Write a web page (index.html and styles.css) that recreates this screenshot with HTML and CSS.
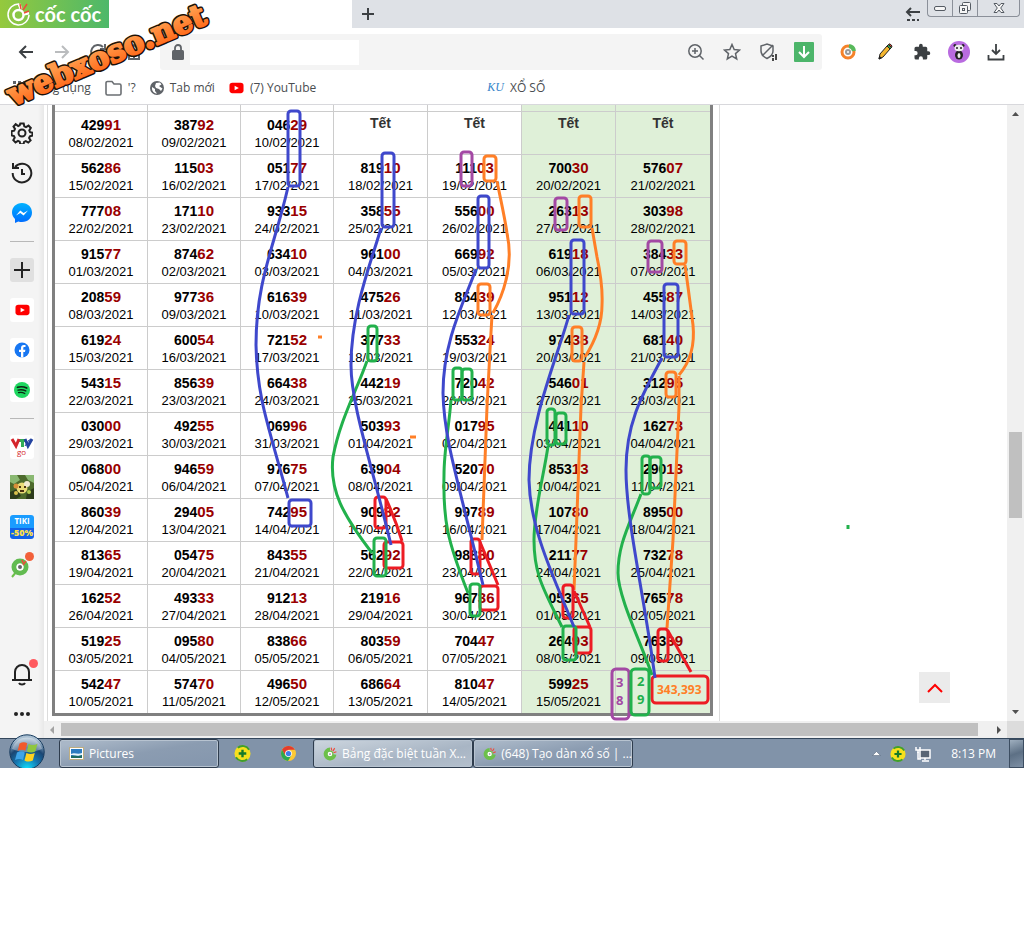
FILE: index.html
```
<!DOCTYPE html>
<html lang="vi">

<head>
    <meta charset="UTF-8">
    <meta name="viewport" content="width=device-width, initial-scale=1.0">
    <title>Bảng đặc biệt tuần</title>
    <link rel="stylesheet" href="styles.css">
</head>

<body>
    <svg class="defs" width="0" height="0" aria-hidden="true">
        <defs>
            <linearGradient id="webxoso" x1="0" y1="0" x2="0" y2="1">
                <stop offset="0.3" stop-color="#ff9a4a"/>
                <stop offset="1" stop-color="#ff5f10"/>
            </linearGradient>
            <linearGradient id="messenger" x1="0" y1="0" x2="0" y2="1">
                <stop offset="0" stop-color="#00b2ff"/>
                <stop offset="1" stop-color="#006aff"/>
            </linearGradient>
            <radialGradient id="orb" cx="0.5" cy="1" r="0.9">
                <stop offset="0" stop-color="#10e4ff"/>
                <stop offset="0.4" stop-color="#1676b0"/>
                <stop offset="0.7" stop-color="#1b4673"/>
                <stop offset="1" stop-color="#a9bfd2"/>
            </radialGradient>
            <symbol id="coccoc" viewBox="0 0 24 24">
                <path d="M12 4A8 8 0 1 0 20 13" fill="none" stroke="#6cc04a" stroke-width="6"/>
                <circle cx="12" cy="12" r="5" fill="#fff" stroke="#6cc04a" stroke-width="2"/>
                <circle cx="12" cy="12" r="1.5" fill="#888"/>
                <path d="M14 1l1 5M20 2l-3 5M23 8l-5 2" stroke="#ee4b3a" stroke-width="2"/>
            </symbol>
            <symbol id="plusball" viewBox="0 0 18 18">
                <circle cx="9" cy="9" r="8.5" fill="#f7e01c"/>
                <path d="M4 3A8 8 0 0 1 16 5M14 15A8 8 0 0 1 2 13" fill="none" stroke="#3f9f2c" stroke-width="2"/>
                <path d="M9 5v8M5 9h8" stroke="#167a2a" stroke-width="2.5"/>
            </symbol>
            <symbol id="youtube" viewBox="0 0 16 12">
                <rect x="0.5" y="0.5" width="15" height="11" rx="3" fill="#f00"/>
                <path d="M6 3.5v5L10.5 6z" fill="#fff"/>
            </symbol>
        </defs>
    </svg>

    <div class="screen">
        <header class="tabstrip">
            <div class="logo">
                <svg width="24" height="24" viewBox="0 0 24 24" fill="none">
                    <path d="M12 2A10.500 10.500 0 1 0 22 13" stroke="#fff" stroke-width="1.5"/>
                    <circle cx="11.5" cy="13" r="5" stroke="#fff" stroke-width="2.5"/>
                    <path d="M12 2l2 5M22 11l-5 1" stroke="#fff" stroke-width="3"/>
                    <path d="M13 2l1 5M20 2l-4 6M22 9l-5 2" stroke="#ee4b3a" stroke-width="1.5"/>
                </svg>
                <span>cốc cốc</span>
            </div>
            <div class="tab"></div>
            <div class="strip">
                <button class="icon-btn small" aria-label="Tab mới">
                    <svg width="14" height="14" viewBox="0 0 14 14" stroke="#3c4043" stroke-width="2"><path d="M7 1v12M1 7h12"/></svg>
                </button>
                <div class="window-buttons">
                    <svg class="restore" width="16" height="16" viewBox="0 0 16 16" fill="none" stroke="#3c4043" stroke-width="2"><path d="M15 6H2M6 2 2 6l4 4"/><path d="M2 14h12" stroke-dasharray="3 2"/></svg>
                    <button aria-label="Thu nhỏ"><svg width="13" height="7" viewBox="0 0 13 7"><rect x="0.5" y="1.5" width="11" height="4" rx="1.5" fill="#f6f6f6" stroke="#555b63"/></svg></button>
                    <button aria-label="Khôi phục"><svg width="14" height="14" viewBox="0 0 14 14" fill="#f6f6f6" stroke="#555b63"><rect x="4.500" y="1.5" width="8" height="8" rx="1"/><rect x="1.5" y="4.5" width="8" height="8" rx="1"/><rect x="4.5" y="7.5" width="2" height="2"/></svg></button>
                    <button class="close" aria-label="Đóng"><svg width="12" height="12" viewBox="0 0 12 12"><path d="M1 1.5h3L6 4l2-2.500h3L7.700 6l3.300 4.500H8L6 8l-2 2.500H1L4.300 6z" fill="#f6f6f6" stroke="#555b63"/></svg></button>
                </div>
            </div>
        </header>

        <div class="toolbar">
            <button class="icon-btn" aria-label="Quay lại"><svg width="16" height="16" viewBox="0 0 16 16" fill="none" stroke="#3c4043" stroke-width="2"><path d="M15 8H2M8 2 2 8l6 6"/></svg></button>
            <button class="icon-btn" aria-label="Tiến"><svg width="16" height="16" viewBox="0 0 16 16" fill="none" stroke="#babcbe" stroke-width="2"><path d="M1 8h13M8 2l6 6-6 6"/></svg></button>
            <button class="icon-btn" aria-label="Tải lại"><svg width="18" height="18" viewBox="0 0 18 18" fill="none" stroke="#5f6368" stroke-width="2"><path d="M16 10A7 7 0 1 1 14 4M16 1v5h-5"/></svg></button>
            <button class="icon-btn" aria-label="Trang chủ"><svg width="18" height="18" viewBox="0 0 18 18" fill="none" stroke="#5f6368" stroke-width="2"><path d="M1 9l8-7 8 7M4 8v8h10V8M9 16v-5"/></svg></button>
            <div class="omnibox">
                <svg class="lock" width="14" height="16" viewBox="0 0 14 16"><rect x="1" y="6" width="12" height="10" rx="1.5" fill="#5f6368"/><path d="M4 7V4a3 3 0 0 1 6 0v3" fill="none" stroke="#5f6368" stroke-width="1.8"/></svg>
                <input type="text" aria-label="Địa chỉ">
                <span class="spacer"></span>
                <button class="icon-btn" aria-label="Thu phóng"><svg width="18" height="18" viewBox="0 0 18 18" fill="none" stroke="#5f6368" stroke-width="1.5"><circle cx="8" cy="8" r="6.2"/><path d="M12.5 12.5l4 4M5 8h6M8 5v6"/></svg></button>
                <button class="icon-btn" aria-label="Dấu trang"><svg width="18" height="18" viewBox="0 0 18 18" fill="none" stroke="#5f6368" stroke-width="1.5"><path d="M9 1.5l2.2 5 5.3.5-4 3.600 1.200 5.400L9 13.200 4.300 16l1.200-5.400-4-3.600 5.300-.5z"/></svg></button>
                <button class="icon-btn" aria-label="Chặn quảng cáo"><svg width="18" height="20" viewBox="0 0 18 20" fill="none" stroke="#5f6368" stroke-width="1.5"><path d="M2 4l6-2 6 2v5c0 4-3 6-6 7.500C5 15 2 13 2 9zM3 14 14 3"/><path d="M13 14h2M14 19v-3M17 18v-6" stroke="#111"/></svg></button>
                <button class="icon-btn" aria-label="Tải xuống video"><svg width="20" height="20" viewBox="0 0 20 20"><rect width="20" height="20" rx="1" fill="#4cb56a"/><path d="M10 4v11M5 10l5 5 5-5" fill="none" stroke="#fff" stroke-width="2"/></svg></button>
            </div>
            <div class="extensions">
                <button class="icon-btn" aria-label="Cốc Cốc"><svg width="16" height="16" viewBox="0 0 16 16" fill="none"><circle cx="8" cy="8" r="6" stroke="#f5822a" stroke-width="3"/><path d="M9 2A6 6 0 0 1 14 7" stroke="#57b95b" stroke-width="4"/><circle cx="8" cy="8" r="3" fill="#999"/><circle cx="8" cy="8" r="1" fill="#fff"/></svg></button>
                <button class="icon-btn" aria-label="Bút chì"><svg width="16" height="18" viewBox="0 0 16 18" stroke="#222"><path d="M2 16l1-5 7-8 3 3-7 8z" fill="#f4b62f"/><path d="M10 3l3 3 1.500-1.500-3-3z" fill="#3aa04b"/><path d="M11.5 1.500 13 .8 15 3l-.5 1.500z" fill="#e8452f"/><path d="M2 16l.6-2.500 1.800 1.500z" fill="#222"/></svg></button>
                <button class="icon-btn" aria-label="Tiện ích"><svg width="18" height="18" viewBox="0 0 24 24"><path d="M20.5 11H19V7a2 2 0 0 0-2-2h-4V3.500a2.500 2.500 0 0 0-5 0V5H4a2 2 0 0 0-2 2v3.800h1.500a2.700 2.700 0 0 1 0 5.400H2V20a2 2 0 0 0 2 2h3.800v-1.500a2.700 2.700 0 0 1 5.400 0V22H17a2 2 0 0 0 2-2v-4h1.500a2.500 2.500 0 0 0 0-5z" fill="#3c4043"/></svg></button>
                <button class="icon-btn" aria-label="Tài khoản"><svg width="22" height="22" viewBox="0 0 22 22"><circle cx="11" cy="11" r="11" fill="#b96be0"/><ellipse cx="11" cy="14" rx="4" ry="4.500" fill="#222"/><ellipse cx="11" cy="14.500" rx="1.500" ry="2.500" fill="#eee"/><circle cx="7" cy="4.500" r="1.500" fill="#222"/><circle cx="15" cy="4.500" r="1.500" fill="#222"/><ellipse cx="11" cy="7" rx="4.500" ry="3.200" fill="#eee"/><circle cx="9" cy="7" r="1" fill="#222"/><circle cx="13" cy="7" r="1" fill="#222"/></svg></button>
                <button class="icon-btn" aria-label="Tải xuống"><svg width="18" height="18" viewBox="0 0 18 18" fill="none" stroke="#3c4043" stroke-width="1.8"><path d="M9 1v10M5 7l4 4 4-4M1.500 12v4.500h15V12"/></svg></button>
            </div>
        </div>

        <nav class="bookmarks">
            <a href="#" class="apps"><svg width="14" height="14" viewBox="0 0 14 14" fill="#5f6368"><path d="M0 0h3v3H0zM5 0h3v3H5zM10 0h3v3h-3zM0 5h3v3H0zM5 5h3v3H5z"/></svg>Ứng dụng</a>
            <a href="#"><svg width="17" height="16" viewBox="0 0 17 16" fill="none" stroke="#6b6f73" stroke-width="1.6"><path d="M1 3a1.500 1.500 0 0 1 1.500-1.500H7l2 2.500h5.500A1.500 1.500 0 0 1 16 5.500v8a1.500 1.500 0 0 1-1.500 1.500h-12A1.500 1.500 0 0 1 1 13.500z"/></svg>'?</a>
            <a href="#"><svg width="14" height="14" viewBox="0 0 14 14"><circle cx="7" cy="7" r="7" fill="#5f6368"/><path d="M2 6l3 2v2l2 2.500C4 12.500 1.500 10 2 6zM6 2l4-.5 1.500 2L9 5l2 1.500 1.500 1L11 10 9 8 6 7l-1-2z" fill="#fff"/></svg>Tab mới</a>
            <a href="#"><svg width="15" height="12"><use href="#youtube"/></svg>(7) YouTube</a>
            <a href="#" class="ku"><i>KU</i>XỔ SỐ</a>
        </nav>

        <div class="main">
            <aside class="sidebar">
                <button aria-label="Cài đặt"><svg width="22" height="22" viewBox="0 0 22 22" fill="none" stroke="#222" stroke-width="2"><path d="M9.300 1.500h3.400l.6 2.800 1.700.8 2.500-1.500 2.300 2.400-1.500 2.400.8 1.700 2.400.6v2.800l-2.600.8-.8 1.700 1.500 2.400-2.300 2.200-2.500-1.500-1.700.8-.6 2.400H9.300l-.6-2.600-1.700-.8-2.500 1.500-2.200-2.300 1.400-2.400-.7-1.600-2.400-.7V9.200l2.600-.6.8-1.700-1.500-2.300 2.200-2.400L7.200 4l1.500-.7z"/><circle cx="11" cy="11" r="3.5"/></svg></button>
                <button aria-label="Lịch sử"><svg width="22" height="22" viewBox="0 0 22 22" fill="none" stroke="#222" stroke-width="2"><path d="M4 5a9.300 9.300 0 1 1-2.300 6M2 1v5h6M11 7v5h3"/></svg></button>
                <button aria-label="Messenger"><svg width="20" height="20" viewBox="0 0 20 20"><path d="M10 0C4 0 0 4.300 0 9.600c0 2.500 1.200 4.700 3 6.300V20l3.300-1.500c1.200.4 2.400.6 3.700.6 6 0 10-4.200 10-9.500S16 0 10 0z" fill="url(#messenger)"/><path d="M4 12.500l4.300-5 3.300 2.500L16 7.500l-4.400 5L8.300 10z" fill="#fff"/></svg></button>
                <hr>
                <button class="add" aria-label="Thêm"><svg width="16" height="16" viewBox="0 0 16 16" stroke="#222" stroke-width="2"><path d="M8 0v16M0 8h16"/></svg></button>
                <button class="tile" aria-label="YouTube"><svg width="15" height="12"><use href="#youtube"/></svg></button>
                <button class="tile" aria-label="Facebook"><svg width="16" height="16" viewBox="0 0 16 16"><circle cx="8" cy="8" r="7.5" fill="#1877f2"/><path d="M7 15.500V10H5V7.800h2V6c0-2 1.100-3 2.900-3l1.600.1V5h-1c-1 0-1.200.5-1.200 1.200v1.600h2.100L11 10H9.300v5.500z" fill="#fff"/></svg></button>
                <button class="tile" aria-label="Spotify"><svg width="16" height="16" viewBox="0 0 16 16" fill="none" stroke="#0c2514" stroke-linecap="round"><circle cx="8" cy="8" r="8" fill="#1ed760" stroke="none"/><path d="M3.500 5.300c3-.9 6.500-.6 9.200.8" stroke-width="1.7"/><path d="M4 8.100c2.600-.7 5.500-.4 7.800.8" stroke-width="1.4"/><path d="M4.500 10.700c2.100-.5 4.400-.3 6.300.8" stroke-width="1.2"/></svg></button>
                <hr>
                <button class="tile" aria-label="VTV go"><svg width="24" height="24" viewBox="0 0 24 24" fill="none"><path d="M9 5.500h7M12.500 5v7" stroke="#31ad57" stroke-width="3"/><path d="M2 4l4 7 3-7" stroke="#d5252c" stroke-width="3"/><path d="M15 11l4-6 3 0" stroke="#2343a0" stroke-width="1"/><path d="M15 4l3 7 4-7" stroke="#2343a0" stroke-width="3"/><text x="7" y="20" class="go">go</text></svg></button>
                <button aria-label="Nông trại"><svg width="24" height="24" viewBox="0 0 24 24"><rect width="24" height="24" fill="#4d6a2c"/><path d="M0 0h7l3 5-6 4-4-2zM15 0h9v8l-6-3z" fill="#8ab872"/><path d="M0 17l7-3 4 7-5 3H0zM17 17l7-4v11h-8z" fill="#2d3c1c"/><circle cx="12" cy="13" r="5.5" fill="#eadb77"/><circle cx="6" cy="11" r="2.5" fill="#d8903a"/><circle cx="17" cy="9" r="3" fill="#f1ead0"/><path d="M9 12h2M14 12h2M10 16h4" stroke="#4b3211" stroke-width="2"/><circle cx="6" cy="18" r="2" fill="#d9c04c"/><circle cx="19" cy="17" r="2" fill="#b1cc4c"/></svg></button>
                <button class="tiki" aria-label="Tiki"><span>TIKI</span><b>-50%</b></button>
                <button class="with-dot" aria-label="Cốc Cốc"><svg width="24" height="24" viewBox="0 0 24 24" fill="none"><path d="M7 16 2 22" stroke="#6cc04a" stroke-width="2"/><circle cx="10" cy="12" r="6" stroke="#62bb50" stroke-width="5"/><circle cx="10" cy="12" r="3.5" fill="#fff"/><circle cx="10" cy="12" r="2" fill="#666"/><path d="M12 5l1 3M16 6l-3 4" stroke="#ee4b3a" stroke-width="1.5"/></svg></button>
                <button class="bell with-dot" aria-label="Thông báo"><svg width="22" height="24" viewBox="0 0 22 24" fill="none" stroke="#222" stroke-width="2"><path d="M1 18h20M4 18V10a7 7 0 0 1 14 0v8"/><path d="M8 21c1 2 5 2 6 0"/></svg></button>
                <button aria-label="Thêm nữa"><svg width="18" height="4" viewBox="0 0 18 4" fill="#222"><circle cx="3" cy="2" r="2"/><circle cx="9" cy="2" r="2"/><circle cx="15" cy="2" r="2"/></svg></button>
            </aside>

            <div class="pane">
                <div class="view">
                    <div class="page">
                        <div class="sheet">
                            <table class="results">
                                <colgroup>
                                    <col class="c-mon">
                                    <col class="c-mid" span="2">
                                    <col class="c-wide" span="3">
                                    <col>
                                </colgroup>
                                <thead>
                                    <tr><td></td><td></td><td></td><td></td><td></td><td></td><td></td></tr>
                                </thead>
                                <tbody>
                                    <tr><td><b>429<em>91</em></b>08/02/2021</td><td><b>387<em>92</em></b>09/02/2021</td><td><b>046<em>29</em></b>10/02/2021</td><td class="tet">Tết</td><td class="tet">Tết</td><td class="tet">Tết</td><td class="tet">Tết</td></tr>
                                    <tr><td><b>562<em>86</em></b>15/02/2021</td><td><b>115<em>03</em></b>16/02/2021</td><td><b>051<em>77</em></b>17/02/2021</td><td><b>819<em>10</em></b>18/02/2021</td><td><b>111<em>03</em></b>19/02/2021</td><td><b>700<em>30</em></b>20/02/2021</td><td><b>576<em>07</em></b>21/02/2021</td></tr>
                                    <tr><td><b>777<em>08</em></b>22/02/2021</td><td><b>171<em>10</em></b>23/02/2021</td><td><b>933<em>15</em></b>24/02/2021</td><td><b>358<em>55</em></b>25/02/2021</td><td><b>556<em>00</em></b>26/02/2021</td><td><b>263<em>13</em></b>27/02/2021</td><td><b>303<em>98</em></b>28/02/2021</td></tr>
                                    <tr><td><b>915<em>77</em></b>01/03/2021</td><td><b>874<em>62</em></b>02/03/2021</td><td><b>634<em>10</em></b>03/03/2021</td><td><b>961<em>00</em></b>04/03/2021</td><td><b>669<em>92</em></b>05/03/2021</td><td><b>619<em>18</em></b>06/03/2021</td><td><b>384<em>33</em></b>07/03/2021</td></tr>
                                    <tr><td><b>208<em>59</em></b>08/03/2021</td><td><b>977<em>36</em></b>09/03/2021</td><td><b>616<em>39</em></b>10/03/2021</td><td><b>475<em>26</em></b>11/03/2021</td><td><b>854<em>39</em></b>12/03/2021</td><td><b>951<em>12</em></b>13/03/2021</td><td><b>455<em>87</em></b>14/03/2021</td></tr>
                                    <tr><td><b>619<em>24</em></b>15/03/2021</td><td><b>600<em>54</em></b>16/03/2021</td><td><b>721<em>52</em></b>17/03/2021</td><td><b>377<em>33</em></b>18/03/2021</td><td><b>553<em>24</em></b>19/03/2021</td><td><b>974<em>38</em></b>20/03/2021</td><td><b>681<em>40</em></b>21/03/2021</td></tr>
                                    <tr><td><b>543<em>15</em></b>22/03/2021</td><td><b>856<em>39</em></b>23/03/2021</td><td><b>664<em>38</em></b>24/03/2021</td><td><b>442<em>19</em></b>25/03/2021</td><td><b>720<em>42</em></b>26/03/2021</td><td><b>546<em>01</em></b>27/03/2021</td><td><b>312<em>95</em></b>28/03/2021</td></tr>
                                    <tr><td><b>030<em>00</em></b>29/03/2021</td><td><b>492<em>55</em></b>30/03/2021</td><td><b>069<em>96</em></b>31/03/2021</td><td><b>503<em>93</em></b>01/04/2021</td><td><b>017<em>95</em></b>02/04/2021</td><td><b>441<em>10</em></b>03/04/2021</td><td><b>162<em>73</em></b>04/04/2021</td></tr>
                                    <tr><td><b>068<em>00</em></b>05/04/2021</td><td><b>946<em>59</em></b>06/04/2021</td><td><b>976<em>75</em></b>07/04/2021</td><td><b>639<em>04</em></b>08/04/2021</td><td><b>520<em>70</em></b>09/04/2021</td><td><b>853<em>13</em></b>10/04/2021</td><td><b>290<em>13</em></b>11/04/2021</td></tr>
                                    <tr><td><b>860<em>39</em></b>12/04/2021</td><td><b>294<em>05</em></b>13/04/2021</td><td><b>742<em>95</em></b>14/04/2021</td><td><b>909<em>82</em></b>15/04/2021</td><td><b>997<em>89</em></b>16/04/2021</td><td><b>107<em>80</em></b>17/04/2021</td><td><b>895<em>00</em></b>18/04/2021</td></tr>
                                    <tr><td><b>813<em>65</em></b>19/04/2021</td><td><b>054<em>75</em></b>20/04/2021</td><td><b>843<em>55</em></b>21/04/2021</td><td><b>562<em>92</em></b>22/04/2021</td><td><b>988<em>80</em></b>23/04/2021</td><td><b>211<em>77</em></b>24/04/2021</td><td><b>732<em>78</em></b>25/04/2021</td></tr>
                                    <tr><td><b>162<em>52</em></b>26/04/2021</td><td><b>493<em>33</em></b>27/04/2021</td><td><b>912<em>13</em></b>28/04/2021</td><td><b>219<em>16</em></b>29/04/2021</td><td><b>967<em>36</em></b>30/04/2021</td><td><b>053<em>65</em></b>01/05/2021</td><td><b>765<em>78</em></b>02/05/2021</td></tr>
                                    <tr><td><b>519<em>25</em></b>03/05/2021</td><td><b>095<em>80</em></b>04/05/2021</td><td><b>838<em>66</em></b>05/05/2021</td><td><b>803<em>59</em></b>06/05/2021</td><td><b>704<em>47</em></b>07/05/2021</td><td><b>264<em>93</em></b>08/05/2021</td><td><b>763<em>39</em></b>09/05/2021</td></tr>
                                    <tr><td><b>542<em>47</em></b>10/05/2021</td><td><b>574<em>70</em></b>11/05/2021</td><td><b>496<em>50</em></b>12/05/2021</td><td><b>686<em>64</em></b>13/05/2021</td><td><b>810<em>47</em></b>14/05/2021</td><td><b>599<em>25</em></b>15/05/2021</td><td></td></tr>
                                </tbody>
                            </table>
                        </div>
                        <button class="to-top" aria-label="Lên đầu trang"><svg width="16" height="10" viewBox="0 0 16 10" fill="none" stroke="#f00" stroke-width="2"><path d="M1 9l7-7 7 7"/></svg></button>
                    </div>
                    <div class="vscroll">
                        <svg width="7" height="4" viewBox="0 0 7 4" fill="#505050"><path d="M0 4h7L3.500 0z"/></svg>
                        <span class="thumb"></span>
                        <svg width="7" height="4" viewBox="0 0 7 4" fill="#505050"><path d="M0 0h7L3.500 4z"/></svg>
                    </div>
                </div>
                <div class="hscroll">
                    <svg width="4" height="8" viewBox="0 0 4 8" fill="#a3a3a3"><path d="M4 0v8L0 4z"/></svg>
                    <span class="thumb"></span>
                    <svg width="4" height="8" viewBox="0 0 4 8" fill="#505050"><path d="M0 0v8l4-4z"/></svg>
                    <span class="corner"></span>
                </div>
            </div>
        </div>

        <footer class="taskbar">
            <button class="start" aria-label="Start"><svg width="36" height="36" viewBox="0 0 36 36"><circle cx="18" cy="18" r="17.200" fill="url(#orb)" stroke="#173b5e"/><path d="M3 15a15.500 15.500 0 0 1 30 0c-9 4-21 4-30 0z" fill="#fff" opacity="0.35"/><path d="M10.500 9.500c3-1.700 5.500-1.600 7.700-.3l-1.800 7.600c-2.300-1.400-5-1.300-7.800.2z" fill="#f2592a"/><path d="M19.500 10c3 1.500 6 1.200 9-.2l-2.200 7.700c-3 1.300-5.700 1.300-8.300-.1z" fill="#8fc63f"/><path d="M8 18.500c3-1.600 5.500-1.500 7.800-.1L14 26c-2.500-1.400-5-1.400-8 0z" fill="#3fa4e8"/><path d="M17.400 19c2.800 1.400 5.400 1.300 8.400.1l-2 7.500c-3 1.400-5.600 1.300-8.300-.2z" fill="#ffd21f"/></svg></button>
            <button class="task pictures"><svg width="15" height="13" viewBox="0 0 15 13"><rect x="0.5" y="0.5" width="14" height="12" fill="#fff" stroke="#bfae80"/><path d="M2 2h11v9H2z" fill="#2b7bc0"/><path d="M2 7c4-2 6 1 11-1v2c-5 2-7-.5-11 0z" fill="#e7f4fb"/><path d="M2 9c4-1 7 1 11-1v3H2z" fill="#1c6b62"/></svg>Pictures</button>
            <button class="pin" aria-label="Cốc Cốc Plus"><svg width="17" height="17"><use href="#plusball"/></svg></button>
            <button class="pin" aria-label="Chrome"><svg width="15" height="15" viewBox="0 0 16 16"><circle cx="8" cy="8" r="8" fill="#fdc935"/><path d="M1.100 4A8 8 0 0 1 14.900 4H8L4.500 10z" fill="#e33b2e"/><path d="M1.100 4A8 8 0 0 0 7.500 16L11 10H4.600z" fill="#2da94f"/><circle cx="8" cy="8" r="3.6" fill="#fff"/><circle cx="8" cy="8" r="2.8" fill="#3f7de8"/></svg></button>
            <button class="task active"><svg width="14" height="14"><use href="#coccoc"/></svg>Bảng đặc biệt tuần X...</button>
            <button class="task"><svg width="14" height="14"><use href="#coccoc"/></svg>(648) Tạo dàn xổ số | ...</button>
            <div class="tray">
                <svg width="9" height="5" viewBox="0 0 9 5"><path d="M0.5 4.500h8l-4-4z" fill="#fff" stroke="#4b5b70" stroke-width="0.5"/></svg>
                <svg width="16" height="16"><use href="#plusball"/></svg>
                <svg width="16" height="16" viewBox="0 0 16 16" fill="none"><rect x="5" y="4" width="10" height="8" fill="#5a6675" stroke="#fff" stroke-width="1.5"/><path d="M10 12v2M7 15h7M3 6v7h3" stroke="#fff" stroke-width="1.5"/><path d="M1 1v3h4V1M3 4v3" stroke="#fff" stroke-width="1.5"/></svg>
                <time>8:13 PM</time>
            </div>
            <button class="desktop" aria-label="Show desktop"></button>
        </footer>

        <!-- hand-drawn marks over the table -->
        <svg class="marks" width="1024" height="768" viewBox="0 0 1024 768">
            <g class="orange">
                <rect x="484" y="156" width="12" height="25" rx="3"/>
                <path d="M497 181C500 197 504 213 507 233Q512 257 506 280Q502 297 493 313"/>
                <rect x="478" y="284" width="12" height="31" rx="3"/>
                <path d="M492 315L490 350 487 407 482 540"/>
                <rect x="579" y="196" width="12" height="31" rx="3"/>
                <path d="M592 228L597 257Q603 285 602 305Q602 330 585 357"/>
                <rect x="572" y="327" width="10" height="34" rx="3"/>
                <path d="M584 362L581 407 576 540 574 590"/>
                <rect x="674" y="241" width="12" height="23" rx="3"/>
                <path d="M685 265L688 287 693 325Q696 355 679 375"/>
                <rect x="666" y="372" width="10" height="25" rx="3"/>
                <path d="M679 376L679 407 673 540 667 628"/>
                <path d="M318 337h4M410 437h6"/>
            </g>
            <g class="purple">
                <rect x="461" y="152" width="11" height="34" rx="3"/>
                <rect x="555" y="198" width="12" height="32" rx="3"/>
                <rect x="648" y="241" width="14" height="31" rx="3"/>
                <rect x="612" y="669" width="17" height="50" rx="4"/>
            </g>
            <g class="red">
                <rect x="375" y="497" width="11" height="31" rx="3"/>
                <path d="M386 499C392 512 398 528 402 541"/>
                <rect x="384" y="542" width="19" height="26" rx="3"/>
                <rect x="471" y="539" width="9" height="35" rx="3"/>
                <path d="M480 542L498 585"/>
                <rect x="480" y="586" width="18" height="24" rx="3"/>
                <rect x="563" y="585" width="10" height="33" rx="3"/>
                <path d="M574 591L590 627"/>
                <rect x="574" y="627" width="17" height="26" rx="3"/>
                <rect x="658" y="629" width="10" height="32" rx="3"/>
                <path d="M668 631L691 672"/>
                <rect x="652" y="676" width="56" height="27" rx="4"/>
            </g>
            <g class="green">
                <rect x="368" y="326" width="9" height="35" rx="3"/>
                <path d="M367 361C356 392 340 420 333 457C329 490 343 515 372 553"/>
                <rect x="374" y="538" width="12" height="38" rx="3"/>
                <rect x="453" y="368" width="9" height="32" rx="3"/>
                <rect x="462" y="369" width="10" height="31" rx="3"/>
                <path d="M451 400C449 427 444 450 444 475C443 520 447 540 468 593"/>
                <rect x="470" y="584" width="10" height="32" rx="3"/>
                <rect x="547" y="409" width="8" height="36" rx="3"/>
                <rect x="556" y="413" width="10" height="31" rx="3"/>
                <path d="M548 446C544 475 534 510 534 540C534 575 544 590 562 627"/>
                <rect x="563" y="626" width="13" height="34" rx="3"/>
                <rect x="642" y="456" width="8" height="38" rx="3"/>
                <rect x="650" y="457" width="11" height="31" rx="3"/>
                <path d="M641 494C628 528 618 545 618 573C618 597 642 645 652 675"/>
                <rect x="631" y="669" width="18" height="46" rx="4"/>
                <path d="M848 525v4"/>
            </g>
            <g class="blue">
                <rect x="288" y="111" width="12" height="75" rx="3"/>
                <path d="M288 187C275 245 256 280 256 345C257 400 270 430 288 498"/>
                <rect x="289" y="500" width="22" height="26" rx="3"/>
                <rect x="382" y="153" width="12" height="74" rx="3"/>
                <path d="M381 228C373 257 351 310 351 365C351 405 372 465 391 545"/>
                <rect x="478" y="196" width="11" height="72" rx="3"/>
                <path d="M476 269C465 300 443 340 443 393C444 440 458 480 483 585"/>
                <rect x="571" y="240" width="13" height="74" rx="3"/>
                <path d="M569 315C560 350 529 420 529 480C530 530 555 580 574 627"/>
                <rect x="664" y="284" width="14" height="73" rx="3"/>
                <path d="M662 358C645 390 626 420 626 470C626 520 645 600 655 678"/>
            </g>
            <g class="notes">
                <text class="n-purple" x="616" y="687">3</text>
                <text class="n-purple" x="616" y="705">8</text>
                <text class="n-green" x="637" y="686">2</text>
                <text class="n-green" x="637" y="704">9</text>
                <text class="n-orange" x="657" y="694">343,393</text>
            </g>
            <g class="brand" transform="translate(13 106) rotate(-23)">
                <text class="brand-edge">webxoso.net</text>
                <text class="brand-fill">webxoso.net</text>
            </g>
        </svg>
    </div>
</body>

</html>
```
FILE: styles.css
```
* {
    box-sizing: border-box;
}

body {
    font-family: "Open Sans", "Noto Sans", sans-serif;
    font-size: 12px;
    margin: 0;
    background-color: white;
}

button {
    display: flex;
    align-items: center;
    justify-content: center;
    padding: 0;
    border: none;
    background: none;
    font: inherit;
    cursor: pointer;
}

.defs {
    position: absolute;
}

.screen {
    position: relative;
    margin-right: 12px;
}

/* tab strip */
.tabstrip {
    display: flex;
    height: 28px;
}

.logo {
    display: flex;
    align-items: center;
    gap: 4px;
    width: 109px;
    padding-left: 7px;
    background: linear-gradient(90deg, #95c93d, #4db86a);
    color: white;
    font-family: Lato, sans-serif;
    font-size: 20px;
    font-weight: bold;
    line-height: 28px;
    white-space: nowrap;
}

.tab {
    width: 243px;
}

.strip {
    display: flex;
    flex: 1;
    justify-content: space-between;
    padding: 0 4px 0 0;
    background-color: #dee1e6;
}

.icon-btn {
    width: 36px;
    height: 36px;
}

.icon-btn.small {
    width: 32px;
    height: 28px;
}

.window-buttons {
    display: flex;
    height: 17px;
}

.window-buttons .restore {
    margin: 6px 6px 0 0;
}

.window-buttons button {
    width: 25px;
    border: 1px solid #8b9099;
    border-top: none;
    border-right: none;
}

.window-buttons button:nth-of-type(1) {
    border-bottom-left-radius: 4px;
}

.window-buttons .close {
    width: 43px;
    border-right: 1px solid #8b9099;
    border-bottom-right-radius: 4px;
}

/* toolbar */
.toolbar {
    display: flex;
    align-items: center;
    height: 48px;
    padding: 0 10px 0 8px;
}

.omnibox {
    display: flex;
    flex: 1;
    align-items: center;
    height: 36px;
    margin: 0 8px;
    border-radius: 3px;
    background-color: #f4f4f4;
}

.lock {
    margin: 0 5px 0 11px;
}

.omnibox input {
    width: 169px;
    height: 25px;
    border: none;
    background-color: white;
}

.spacer {
    flex: 1;
}

.extensions {
    display: flex;
    gap: 1px;
}

/* bookmarks */
.bookmarks {
    display: flex;
    align-items: center;
    gap: 14px;
    height: 29px;
    padding: 0 0 5px 13px;
    border-bottom: 1px solid #d8d8dc;
}

.bookmarks a {
    display: flex;
    align-items: center;
    gap: 6px;
    color: #4a4d50;
    text-decoration: none;
    white-space: nowrap;
}

.bookmarks .apps {
    gap: 9px;
}

.bookmarks .ku {
    margin-left: 157px;
}

.ku i {
    color: #3583c9;
    font-family: "Liberation Serif", serif;
    font-size: 12px;
}

/* main area */
.main {
    display: flex;
}

.sidebar {
    display: flex;
    flex-direction: column;
    align-items: center;
    gap: 16px;
    width: 44px;
    padding: 16px 0 12px;
    background: linear-gradient(90deg, #f4f4f4 38px, #e8e8e8);
}

.sidebar button {
    width: 24px;
    height: 24px;
}

.sidebar hr {
    width: 24px;
    height: 1px;
    margin: 0;
    border: none;
    background-color: #b8b8b8;
}

.sidebar .add {
    border-radius: 3px;
    background-color: #e0e0e0;
}

.sidebar .tile {
    border-radius: 3px;
    background-color: white;
}

.go {
    fill: #d5252c;
    font-size: 8px;
}

.sidebar .tiki {
    flex-direction: column;
    border-radius: 3px;
    background: linear-gradient(#1a9cff 13px, #1262e8 13px);
    color: white;
    font-size: 8px;
    font-weight: bold;
    line-height: 12px;
}

.tiki b {
    color: #ffe14a;
    font-size: 9px;
    line-height: 12px;
}

.with-dot {
    position: relative;
}

.with-dot::after {
    content: "";
    position: absolute;
    top: -3px;
    right: 0;
    width: 9px;
    height: 9px;
    border-radius: 50%;
    background-color: #f2603a;
}

.sidebar .bell {
    margin-top: auto;
}

.bell::after {
    right: -4px;
    background-color: #ff5a5f;
}

.pane {
    display: flex;
    flex: 1;
    flex-direction: column;
}

.view {
    display: flex;
    flex: 1;
}

.page {
    position: relative;
    flex: 1;
    padding-left: 3px;
}

.sheet {
    width: 673px;
    padding: 0 4px 5px;
    border: solid #dcdcdc;
    border-width: 0 1px;
}

.results {
    width: 661px;
    table-layout: fixed;
    border: 3px solid #808080;
    border-top: none;
    border-spacing: 0;
    font-family: "Liberation Sans", Arial, sans-serif;
    font-size: 13px;
    line-height: 17px;
    text-align: center;
}

.c-mon {
    width: 92px;
}

.c-mid {
    width: 93px;
}

.c-wide {
    width: 94px;
}

.results td {
    height: 43px;
    padding: 4px 0;
    border-top: 1px solid #ccc;
    border-left: 1px solid #ccc;
    vertical-align: top;
}

.results thead td {
    height: 6px;
    padding: 0;
    border-top: none;
}

.results td:first-child {
    border-left: none;
}

.results td:nth-child(n+6) {
    background-color: #dff0d8;
}

.results b {
    display: block;
    height: 18px;
    font-size: 14px;
}

.results em {
    color: #900;
    font-size: 15px;
    font-style: normal;
}

.results td {
    padding-bottom: 3px;
}

.results .tet {
    padding-top: 3px;
    color: #333;
    font-size: 14px;
    font-weight: bold;
}

.to-top {
    position: absolute;
    right: 57px;
    bottom: 18px;
    width: 31px;
    height: 31px;
    background-color: #ebebeb;
}

/* scrollbars */
.vscroll {
    display: flex;
    flex-direction: column;
    align-items: center;
    width: 17px;
    padding: 7px 0;
    background-color: #f0f0f0;
}

.vscroll .thumb {
    width: 13px;
    height: 86px;
    margin-top: 316px;
    margin-bottom: auto;
    background-color: #c0c0c0;
}

.hscroll {
    display: flex;
    align-items: center;
    height: 17px;
    padding-left: 6px;
    background-color: #f0f0f0;
}

.hscroll .thumb {
    flex: 1;
    height: 13px;
    margin: 0 19px 0 7px;
    background-color: #c0c0c0;
}

.corner {
    width: 17px;
    height: 17px;
    margin-left: 6px;
    background-color: #dcdcdc;
}

/* taskbar */
.taskbar {
    display: flex;
    align-items: center;
    height: 30px;
    border-top: 1px solid #34475c;
    background-color: #8193a9;
    color: white;
}

.start {
    width: 36px;
    height: 30px;
    margin: 0 14px 0 9px;
}

.start svg {
    flex: none;
    margin-bottom: 4px;
}

.task {
    justify-content: flex-start;
    gap: 5px;
    width: 160px;
    height: 29px;
    padding-left: 9px;
    border: 1px solid #2e3c4d;
    border-radius: 3px;
    background: linear-gradient(170deg, #a9b7c7 10%, #8b9cb1 50%, #8496ad);
    box-shadow: inset 0 0 0 1px #b7c3d0;
    color: white;
    white-space: nowrap;
}

.task.active {
    background: linear-gradient(170deg, #cdd6df, #a8b5c4 60%, #b3bfcc);
}

.pin {
    width: 46px;
    height: 29px;
}

.pin + .active {
    margin-left: 2px;
}

.tray {
    display: flex;
    align-items: center;
    gap: 9px;
    margin-left: auto;
    padding-right: 13px;
}

.tray time {
    margin-left: 11px;
}

.desktop {
    width: 15px;
    height: 29px;
    border: 1px solid #3c4d61;
    background: linear-gradient(160deg, #9fafbf, #5d7085 50%, #7e90a5);
}

/* marks */
.marks {
    position: absolute;
    top: 0;
    left: 0;
    fill: none;
    stroke-width: 3px;
    pointer-events: none;
}

.orange {
    stroke: #ff7f27;
}

.purple {
    stroke: #a349a4;
}

.red {
    stroke: #ed1c24;
}

.green {
    stroke: #22b14c;
}

.blue {
    stroke: #3f48cc;
}

.notes {
    font-size: 13px;
    font-weight: bold;
}

.n-purple {
    fill: #a349a4;
}

.n-green {
    fill: #22b14c;
}

.n-orange {
    fill: #ff7f27;
    font-size: 12px;
}

.brand {
    font-family: "DejaVu Serif", serif;
    font-size: 31px;
    font-weight: bold;
    stroke-linejoin: round;
}

.brand-edge {
    stroke: #1c1208;
    stroke-width: 5px;
}

.brand-fill {
    fill: url(#webxoso);
    stroke: url(#webxoso);
    stroke-width: 2px;
}
```
